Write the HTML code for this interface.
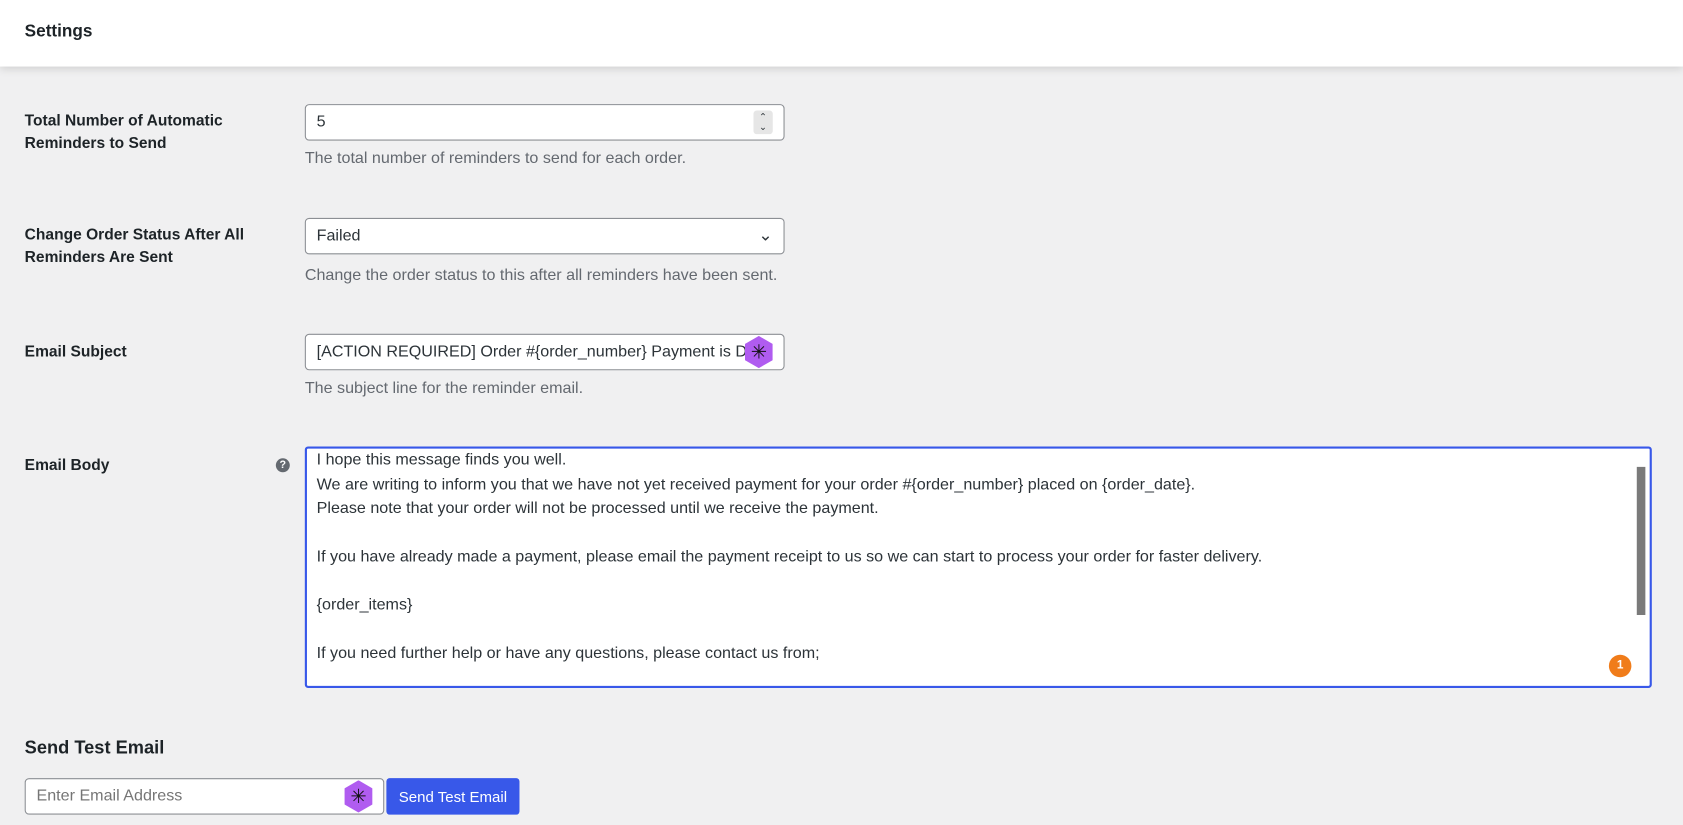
<!DOCTYPE html>
<html><head><meta charset="utf-8"><style>
body{margin:0;width:1683px;height:825px;background:#f0f0f1;font-family:"Liberation Sans",sans-serif;color:#1d2327;overflow:hidden;position:relative}
#w{position:absolute;left:0;top:0;width:1568px;height:769px;transform:scale(1.0733);transform-origin:0 0}
.hdr{position:absolute;left:0;top:0;width:1568px;height:62px;background:#fff;box-shadow:0 2px 8px rgba(0,0,0,.15)}
.hdr span{position:absolute;left:23px;top:21px;font-size:16px;font-weight:bold}
.lbl{position:absolute;left:23px;font-size:14.5px;font-weight:bold;line-height:21px}
.inp{position:absolute;left:284px;width:447px;height:34px;background:#fff;border:1px solid #8c8f94;border-radius:4px;font-size:15px;line-height:32px;padding-left:10px;box-sizing:border-box;color:#2c3338;overflow:hidden;white-space:nowrap}
.desc{position:absolute;left:284px;font-size:15px;color:#646970}
.ta{position:absolute;left:284px;top:416px;width:1255px;height:225px;background:#fff;border:2px solid #3858e9;border-radius:3px;box-sizing:border-box;font-size:15px;line-height:22.5px;padding:0 0 0 9px;color:#2c3338}
.hex{position:absolute;width:26px;height:30px;background:#b05cf0;clip-path:polygon(50% 0,100% 25%,100% 75%,50% 100%,0 75%,0 25%);color:#111;text-align:center;line-height:30px;font-size:18px}
</style></head><body><div id="w">
<div class="hdr"><span>Settings</span></div>
<div class="lbl" style="top:103px">Total Number of Automatic<br>Reminders to Send</div>
<div class="inp" style="top:97px">5<span style="position:absolute;right:10px;top:5px;width:18px;height:20px;background:#e6e6e6;border-radius:3px;font-size:9px;line-height:9px;text-align:center;padding-top:2px">⌃<br>⌄</span></div>
<div class="desc" style="top:139px">The total number of reminders to send for each order.</div>
<div class="lbl" style="top:209px">Change Order Status After All<br>Reminders Are Sent</div>
<div class="inp" style="top:203px">Failed<span style="position:absolute;right:10px;top:0;font-size:16px">&#8964;</span></div>
<div class="desc" style="top:248px">Change the order status to this after all reminders have been sent.</div>
<div class="lbl" style="top:318px">Email Subject</div>
<div class="inp" style="top:311px">[ACTION REQUIRED] Order #{order_number} Payment is Due</div>
<div class="hex" style="left:694px;top:313px">✳</div>
<div class="desc" style="top:353px">The subject line for the reminder email.</div>
<div class="lbl" style="top:424px">Email Body</div>
<div style="position:absolute;left:257px;top:427px;width:13px;height:13px;border-radius:50%;background:#646970;color:#fff;font-size:10px;text-align:center;line-height:13px;font-weight:bold">?</div>
<div class="ta">I hope this message finds you well.<br>We are writing to inform you that we have not yet received payment for your order #{order_number} placed on {order_date}.<br>Please note that your order will not be processed until we receive the payment.<br><br>If you have already made a payment, please email the payment receipt to us so we can start to process your order for faster delivery.<br><br>{order_items}<br><br>If you need further help or have any questions, please contact us from;
<div style="position:absolute;right:4px;top:17px;width:8px;height:138px;background:#7a7a7a"></div>
<div style="position:absolute;right:17px;top:192px;width:21px;height:21px;border-radius:50%;background:#f07c1a;color:#fff;font-size:11px;text-align:center;line-height:21px;font-weight:bold">1</div>
</div>
<div style="position:absolute;left:23px;top:687px;font-size:17px;font-weight:bold">Send Test Email</div>
<div class="inp" style="left:23px;top:725px;width:335px;color:#757575">Enter Email Address</div>
<div class="hex" style="left:321px;top:727px">✳</div>
<div style="position:absolute;left:360px;top:725px;width:124px;height:34px;background:#3858e9;border-radius:3px;color:#fff;font-size:14px;line-height:34px;text-align:center">Send Test Email</div>
</div></body></html>
